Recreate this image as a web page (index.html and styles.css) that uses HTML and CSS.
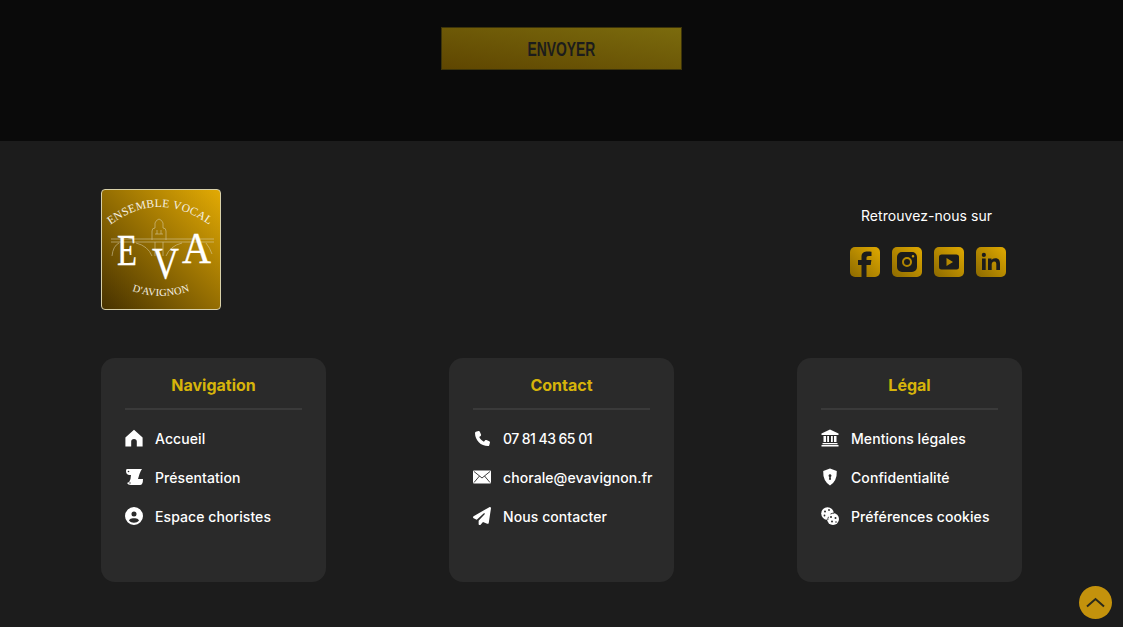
FILE: index.html
```html
<!DOCTYPE html>
<html lang="fr">
<head>
    <meta charset="UTF-8">
    <meta name="viewport" content="width=device-width, initial-scale=1.0">
    <title>Ensemble Vocal d'Avignon</title>
    <link rel="stylesheet" href="styles.css">
</head>
<body>
    <section class="form-end">
        <button type="submit" class="send-btn"><span>ENVOYER</span></button>
    </section>

    <footer class="site-footer">
        <div class="footer-top">
            <a href="#" class="logo">
                <svg viewBox="0 0 118 119" width="118" height="119">
                    <defs>
                        <path id="arcTop" d="M3 39 Q57 -5 113 39"/>
                        <path id="arcBottom" d="M20 97 Q59 115 98 97"/>
                    </defs>
                    <g class="logo-bridge">
                        <path d="M9 49 H112 M9 52 H112"/>
                        <path d="M50 50 V41 Q50 38 53 38 V33 Q54 30 57 29 Q60 30 61 33 V38 Q64 38 64 41 V50"/>
                        <path d="M53 44 H61 M55 40 V44 M59 40 V44 M53 52 V66 M61 52 V66"/>
                        <path d="M10 66 Q11 56 17 53 M34 53 Q46 56 50 66 M64 66 Q68 56 80 53 M104 53 Q108 58 110 64"/>
                    </g>
                    <text class="logo-arc"><textPath href="#arcTop" startOffset="50%" text-anchor="middle">ENSEMBLE VOCAL</textPath></text>
                    <text class="logo-letter logo-e" x="15" y="75" textLength="20" lengthAdjust="spacingAndGlyphs">E</text>
                    <text class="logo-letter" x="50" y="88" textLength="27" lengthAdjust="spacingAndGlyphs">V</text>
                    <text class="logo-letter" x="80" y="73" textLength="29" lengthAdjust="spacingAndGlyphs">A</text>
                    <text class="logo-arc logo-arc-small"><textPath href="#arcBottom" startOffset="50%" text-anchor="middle">D'AVIGNON</textPath></text>
                </svg>
            </a>
            <div class="social">
                <p>Retrouvez-nous sur</p>
                <div class="social-links">
                    <a href="#" class="social-btn">
                        <svg viewBox="0 0 30 30" width="30" height="30"><path d="M11.500 30V18H8v-5h3.500V9.500C11.500 5.800 14.300 4.500 17.500 4.500c1.800 0 3.500.2 4 .3v4.200h-2.700c-1.800 0-2.300.8-2.300 2V13h4.900l-.7 5h-4.200v12z"/></svg>
                    </a>
                    <a href="#" class="social-btn">
                        <svg viewBox="0 0 30 30" width="30" height="30"><path fill-rule="evenodd" d="M10 5h10a5 5 0 0 1 5 5v10a5 5 0 0 1-5 5H10a5 5 0 0 1-5-5V10a5 5 0 0 1 5-5zm5 5a5 5 0 1 0 0 10 5 5 0 0 0 0-10zm0 2a3 3 0 1 1 0 6 3 3 0 0 1 0-6zm6-4a1.300 1.300 0 1 0 0 2.600A1.300 1.300 0 0 0 21 8z"/></svg>
                    </a>
                    <a href="#" class="social-btn">
                        <svg viewBox="0 0 30 30" width="30" height="30"><path fill-rule="evenodd" d="M7.500 7.500h15A2.500 2.500 0 0 1 25 10v10a2.500 2.500 0 0 1-2.500 2.500h-15A2.500 2.500 0 0 1 5 20V10a2.500 2.500 0 0 1 2.500-2.500zM12.500 11v8l6.500-4z"/></svg>
                    </a>
                    <a href="#" class="social-btn">
                        <svg viewBox="0 0 30 30" width="30" height="30"><path d="M6 11.500h3.700V23H6zM7.850 5.800a2.100 2.100 0 1 1 0 4.200 2.100 2.100 0 0 1 0-4.200zM12 11.500h3.500v1.600c.6-1 1.900-1.900 3.800-1.900 3.800 0 4.700 2.400 4.700 5.700V23h-3.700v-5.400c0-1.500-.1-3.200-2-3.200s-2.600 1.500-2.600 3.100V23H12z"/></svg>
                    </a>
                </div>
            </div>
        </div>

        <div class="footer-cards">
            <div class="card">
                <h3>Navigation</h3>
                <ul>
                    <li>
                        <svg class="ico" viewBox="0 0 18 18"><path d="M9 .8 17.600 8.400V17.500H11.800V12.500Q11.800 10 9 10T6.200 12.500V17.500H.4V8.400z"/></svg>
                        <a href="#">Accueil</a>
                    </li>
                    <li>
                        <svg class="ico" viewBox="0 0 18 18"><path d="M2 1H17Q15.500 3 14.500 6L13 11H18Q18 17 15 17H6Q3 17 2 15 5 14 5.500 11L6 7H4Q1 6.500 1 3 1 1 2 1z"/><g class="dots"><circle cx="3.500" cy="3.500" r=".8"/><circle cx="5" cy="15" r=".7"/></g></svg>
                        <a href="#">Présentation</a>
                    </li>
                    <li>
                        <svg class="ico" viewBox="0 0 512 512"><path d="M399 384.200C376.900 345.800 335.400 320 288 320H224c-47.400 0-88.900 25.800-111 64.200c35.200 39.200 86.200 63.800 143 63.800s107.800-24.700 143-63.800zM0 256a256 256 0 1 1 512 0A256 256 0 1 1 0 256zm256 16a72 72 0 1 0 0-144 72 72 0 1 0 0 144z"/></svg>
                        <a href="#">Espace choristes</a>
                    </li>
                </ul>
            </div>

            <div class="card">
                <h3>Contact</h3>
                <ul>
                    <li>
                        <svg class="ico ico-small" viewBox="0 0 512 512"><path d="M164.900 24.600c-7.700-18.600-28-28.500-47.400-23.200l-88 24C12.100 30.200 0 46 0 64C0 311.400 200.600 512 448 512c18 0 33.800-12.100 38.600-29.500l24-88c5.300-19.400-4.600-39.700-23.200-47.400l-96-40c-16.300-6.800-35.200-2.100-46.300 11.600L304.700 368C234.300 334.700 177.300 277.700 144 207.300L193.300 167c13.700-11.200 18.400-30 11.600-46.300l-40-96z"/></svg>
                        <a href="#" class="tel">07 81 43 65 01</a>
                    </li>
                    <li>
                        <svg class="ico" viewBox="0 0 18 18"><rect x="0" y="2.500" width="18" height="13" rx="1"/><path class="cut" d="M1 3.500 9 10 17 3.500M1 14.500 6.500 8M17 14.500 11.500 8"/></svg>
                        <a href="#">chorale@evavignon.fr</a>
                    </li>
                    <li>
                        <svg class="ico" viewBox="0 0 512 512"><path d="M498.100 5.600c10.100 7 15.400 19.100 13.500 31.200l-64 416c-1.500 9.700-7.400 18.200-16 23s-18.900 5.400-28 1.600L284 427.700l-68.500 74.100c-8.900 9.700-22.900 12.900-35.200 8.100S160 493.200 160 480V396.400c0-4 1.500-7.800 4.200-10.700L331.800 202.800c5.800-6.300 5.600-16-.4-22s-15.700-6.400-22-.7L106 360.800 17.700 316.600C7.100 311.300 .3 300.700 0 288.900s5.900-22.800 16.100-28.700l448-256c10.700-6.100 23.900-5.500 34 1.400z"/></svg>
                        <a href="#">Nous contacter</a>
                    </li>
                </ul>
            </div>

            <div class="card">
                <h3>Légal</h3>
                <ul>
                    <li>
                        <svg class="ico" viewBox="0 0 18 18"><path d="M9 .5 17.500 4.500V6H.5V4.500zM2.500 7H5V13H2.500zM6.200 7H8V13H6.200zM10 7H11.800V13H10zM13 7H15.500V13H13zM1.500 14H16.500V15.300H1.500zM.5 16H17.500V17.500H.5z"/></svg>
                        <a href="#">Mentions légales</a>
                    </li>
                    <li>
                        <svg class="ico" viewBox="0 0 18 18"><path fill-rule="evenodd" d="M9 .5 15.800 3Q16.200 13 9 17.500 1.800 13 2.200 3zM9 6.200a1.500 1.500 0 0 0-.7 2.800L7.900 11.800H10.100L9.700 9A1.500 1.500 0 0 0 9 6.200z"/></svg>
                        <a href="#">Confidentialité</a>
                    </li>
                    <li>
                        <svg class="ico" viewBox="0 0 18 18"><circle cx="6.500" cy="6.500" r="6.300"/><circle cx="12" cy="12" r="6"/><g class="dots"><circle cx="4" cy="4.500" r="1"/><circle cx="8" cy="3" r=".9"/><circle cx="3.500" cy="8.500" r=".9"/><circle cx="10" cy="10" r="1"/><circle cx="14.500" cy="11" r="1"/><circle cx="11" cy="14.500" r="1"/><circle cx="15" cy="15" r=".8"/></g><path class="cut" d="M7.500 9.800A6.500 6.500 0 0 0 6.800 13M9.500 7A6.500 6.500 0 0 1 13 6.200"/></svg>
                        <a href="#">Préférences cookies</a>
                    </li>
                </ul>
            </div>
        </div>
    </footer>

    <a href="#" class="to-top">
        <svg viewBox="0 0 33 33" width="33" height="33"><path d="M8 20.500 16.500 13 25 20.500"/></svg>
    </a>
</body>
</html>
```

FILE: styles.css
```css
body {
    margin: 0;
    font-family: "Inter", "Liberation Sans", sans-serif;
    background-color: #1c1c1c;
    color: white;
}

.form-end {
    background-color: #0a0a0a;
    height: 141px;
    padding-top: 27px;
    box-sizing: border-box;
    display: flex;
    justify-content: center;
    align-items: flex-start;
}

.send-btn {
    width: 241px;
    height: 43px;
    padding: 0;
    background: linear-gradient(to top right, #5f4601, #7b6b0d);
    border: 1px solid #3d3409;
    color: #1c1c1c;
    cursor: pointer;
    font-family: "Liberation Sans", sans-serif;
    font-size: 21px;
    font-weight: bold;
}

/* no condensed face installed, so squeeze the bold one */
.send-btn span {
    display: inline-block;
    transform: scaleX(0.66);
}

.site-footer {
    padding: 48px 101px 45px;
    height: 486px;
    box-sizing: border-box;
}

.footer-top {
    display: flex;
    justify-content: space-between;
    align-items: flex-start;
}

.logo {
    display: block;
    width: 118px;
    height: 119px;
    border: 1px solid #d8d0a8;
    border-radius: 4px;
    background: linear-gradient(to bottom left, #e2aa04, #473200);
}

.logo svg {
    display: block;
}

.logo-arc {
    font-family: "Liberation Serif", serif;
    font-size: 11.5px;
    fill: #f6f1e4;
    letter-spacing: 0.3px;
}

.logo-arc-small {
    font-size: 10.5px;
    letter-spacing: 0.2px;
}

.logo-letter {
    font-family: "Liberation Serif", serif;
    font-size: 45px;
    fill: white;
    stroke: white;
    stroke-width: 0.3;
}

.logo-bridge {
    fill: none;
    stroke: #e4dcc0;
    stroke-width: 0.7;
    opacity: 0.7;
}

.social {
    width: 156px;
    margin-right: 16px;
    padding-top: 18px;
    display: flex;
    flex-direction: column;
    align-items: center;
}

.social p {
    margin: 0 0 22px;
    padding-right: 3px;
    font-size: 14px;
    line-height: 18px;
    letter-spacing: 0.05px;
    white-space: nowrap;
}

.social-links {
    display: flex;
    gap: 12px;
}

.social-btn {
    display: block;
    width: 30px;
    height: 30px;
    border-radius: 5px;
    overflow: hidden;
    background: linear-gradient(to bottom left, #e0a900, #8c6a00);
}

.social-btn svg {
    display: block;
    fill: #1c1c1c;
}

.footer-cards {
    display: flex;
    justify-content: space-between;
    margin-top: 48px;
}

.card {
    width: 225px;
    height: 224px;
    box-sizing: border-box;
    padding: 16px 24px;
    background-color: #2a2a2a;
    border-radius: 14px;
}

.card h3 {
    margin: 0;
    padding-bottom: 11px;
    border-bottom: 2px solid #3a3a3a;
    color: #d6b40a;
    font-size: 16px;
    font-weight: 700;
    line-height: 23px;
    text-align: center;
}

.card ul {
    list-style: none;
    margin: 16px 0 0;
    padding: 0;
    display: flex;
    flex-direction: column;
    gap: 15px;
}

.card li {
    display: flex;
    align-items: center;
    gap: 12px;
    height: 24px;
    white-space: nowrap;
}

.card a {
    color: white;
    text-decoration: none;
    font-size: 14px;
    font-weight: 450;
    letter-spacing: 0.08px;
}

.card a.tel {
    letter-spacing: -0.55px;
}

.ico {
    flex: none;
    width: 18px;
    height: 18px;
    fill: white;
}

.ico-small {
    width: 15px;
    height: 15px;
    margin: 0 1.500px;
}

.ico .cut {
    fill: none;
    stroke: #2a2a2a;
    stroke-width: 0.9;
}

.ico .dots {
    fill: #2a2a2a;
}

.to-top {
    position: fixed;
    right: 11px;
    bottom: 8px;
    width: 33px;
    height: 33px;
    border-radius: 50%;
    background-color: #c4920c;
}

.to-top svg {
    display: block;
    fill: none;
    stroke: #2b2a1c;
    stroke-width: 2;
}
```
